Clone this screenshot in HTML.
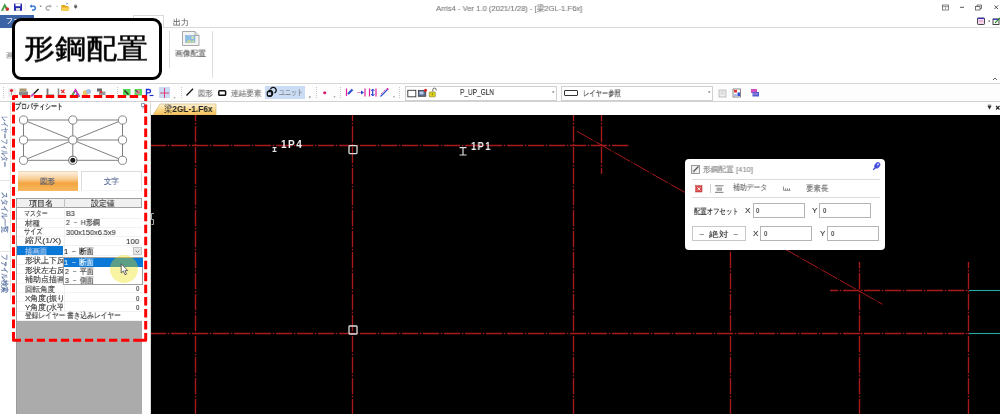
<!DOCTYPE html>
<html><head><meta charset="utf-8">
<style>
*{margin:0;padding:0;box-sizing:border-box}
html,body{width:1000px;height:414px;overflow:hidden;background:#fff;font-family:"Liberation Sans",sans-serif;color:#333}
.a{position:absolute;white-space:nowrap}
.tx{will-change:transform}
</style></head><body>
<svg class="a" style="left:0;top:0" width="90" height="14"><path d="M1 10.8L4.8 3.2L8.6 10.8Z" fill="#3a9a3a"/><path d="M3 10.8L4.8 7L6.6 10.8Z" fill="#fff"/><circle cx="7.3" cy="9" r="1.8" fill="#d03030"/><rect x="14" y="3.6" width="8" height="7.2" fill="#2a2ab0"/><rect x="15.5" y="3.6" width="5" height="2.6" fill="#fff"/><rect x="16" y="8" width="4" height="2.8" fill="#ddd"/><path d="M25.2 3V11" stroke="#e4e4e4"/><path d="M30.5 6.2H34a2 2 0 0 1 0 3.8H32" stroke="#3a78d0" stroke-width="1.6" fill="none"/><path d="M29.7 6.2L31.8 4.3V8.1Z" fill="#3a78d0"/><path d="M39.5 5.8h2.4l-1.2 1.3z" fill="#555"/><path d="M51 6.2H47.5a2 2 0 0 0 0 3.8H49.5" stroke="#b0b0b0" stroke-width="1.5" fill="none"/><path d="M51.8 6.2L49.7 4.3V8.1Z" fill="#b0b0b0"/><path d="M56 5.8h2.2l-1.1 1.2z" fill="#bbb"/><path d="M61.3 5H65L66 6H68.5V10.8H61.3Z" fill="#e0a820"/><path d="M62.3 7.5H69.8L68.5 10.8H61.3Z" fill="#f6d050"/><path d="M66 4.2L68 3.2" stroke="#6a8ac0" stroke-width="1"/><path d="M74.3 5.2h2.7M74.3 6.4h2.7l-1.35 1.9z" stroke="#444" stroke-width="0.8" fill="#444"/></svg>
<div class="a tx" style="left:435.60px;top:3.50px;font-size:8px;line-height:10px;color:#7a7a7a;font-weight:normal;font-family:'Liberation Sans',sans-serif;transform:scale(0.951,1.000);transform-origin:0 0;-webkit-text-stroke:0.12px #7a7a7a;">Arris4 - Ver 1.0 (2021/1/28) - [梁2GL-1.F6x]</div>
<svg class="a" style="left:930px;top:0" width="70" height="30"><rect x="12.5" y="5" width="6" height="5" fill="none" stroke="#666" stroke-width="0.8"/><path d="M12.5 6.6H18.5M15.5 7.3V9" stroke="#666" stroke-width="0.7"/><path d="M30 7.3H34" stroke="#444" stroke-width="0.9"/><rect x="45.5" y="6.5" width="4.5" height="3.5" fill="none" stroke="#555" stroke-width="0.8"/><path d="M47 6.5V5H51.5V8.5H50" fill="none" stroke="#555" stroke-width="0.8"/><path d="M64.5 5.5L68 9M68 5.5L64.5 9" stroke="#444" stroke-width="0.9"/><rect x="47.5" y="18" width="7" height="6.5" rx="0.8" fill="#f4d8f0" stroke="#333" stroke-width="0.9"/><path d="M47.5 18.4H54.5" stroke="#2a2ad0" stroke-width="1"/><path d="M49 21H53" stroke="#e080c0" stroke-width="0.8"/><rect x="58.5" y="20.5" width="1.4" height="1.2" fill="#444"/><rect x="63" y="19" width="6" height="5.5" fill="#fff" stroke="#333" stroke-width="0.9"/><path d="M63 19.3H69" stroke="#2a2ad0" stroke-width="1"/><path d="M65 23L70 18" stroke="#2a8a2a" stroke-width="1.1"/></svg>
<div class="a" style="left:0;top:27px;width:1000px;height:1px;background:#dadada"></div>
<div class="a" style="left:0;top:15px;width:34px;height:13px;background:#3c63a6"></div>
<div class="a tx" style="left:5.60px;top:16.30px;font-size:7px;line-height:9px;color:#ffffff;font-weight:normal;font-family:'Liberation Sans',sans-serif;-webkit-text-stroke:0.12px #ffffff;">ファイル</div>
<div class="a" style="left:133px;top:15px;width:31px;height:13px;border:1px solid #dadada;border-bottom:none;background:#fff"></div>
<div class="a tx" style="left:172.80px;top:17.60px;font-size:8px;line-height:10px;color:#5a5a5a;font-weight:normal;font-family:'Liberation Sans',sans-serif;transform:scale(0.987,1.000);transform-origin:0 0;-webkit-text-stroke:0.12px #5a5a5a;">出力</div>
<div class="a tx" style="left:5.70px;top:50.60px;font-size:8px;line-height:10px;color:#888;font-weight:normal;font-family:'Liberation Sans',sans-serif;-webkit-text-stroke:0.12px #888;">画</div>
<div class="a" style="left:169px;top:31px;width:1px;height:37px;background:#dedede"></div>
<div class="a" style="left:212px;top:31px;width:1px;height:47px;background:#dedede"></div>
<svg class="a" style="left:181px;top:30px" width="20" height="17"><path d="M1.5 1.5H14L18 5.5V15.5H1.5Z" fill="#f4f4f4" stroke="#a8a8a8"/><path d="M14 1.5V5.5H18" fill="#e0e0e0" stroke="#a8a8a8"/><rect x="4.5" y="5.5" width="9.5" height="7" fill="#8cbde6" stroke="#7aa8d0" stroke-width="0.5"/><path d="M5 12.5L8 9.5L10.5 11.5L12.5 10L13.8 12.5Z" fill="#c8d890"/><circle cx="11.5" cy="7.5" r="1.2" fill="#f0e8a0"/></svg>
<div class="a tx" style="left:175.00px;top:49.30px;font-size:8px;line-height:10px;color:#5e5e5e;font-weight:normal;font-family:'Liberation Sans',sans-serif;transform:scale(0.969,1.000);transform-origin:0 0;-webkit-text-stroke:0.12px #5e5e5e;">画像配置</div>
<svg class="a" style="left:990px;top:74px" width="10" height="8"><path d="M3 6L5 4L7 6" stroke="#666" stroke-width="1" fill="none"/></svg>
<div class="a" style="left:0;top:83px;width:1000px;height:1px;background:#d6d6d6"></div>
<div class="a" style="left:0;top:84px;width:1000px;height:17px;background:#fdfdfd"></div>
<div class="a" style="left:0;top:101px;width:1000px;height:1px;background:#d2d2d2"></div>
<div class="a" style="left:3px;top:87px;width:1px;height:12px;background:repeating-linear-gradient(#c8c8c8 0 1px,transparent 1px 2px)"></div><div class="a" style="left:117px;top:87px;width:1px;height:12px;background:repeating-linear-gradient(#c8c8c8 0 1px,transparent 1px 2px)"></div><div class="a" style="left:181px;top:87px;width:1px;height:12px;background:repeating-linear-gradient(#c8c8c8 0 1px,transparent 1px 2px)"></div><div class="a" style="left:316px;top:87px;width:1px;height:12px;background:repeating-linear-gradient(#c8c8c8 0 1px,transparent 1px 2px)"></div><div class="a" style="left:340px;top:87px;width:1px;height:12px;background:repeating-linear-gradient(#c8c8c8 0 1px,transparent 1px 2px)"></div><div class="a" style="left:399px;top:87px;width:1px;height:12px;background:repeating-linear-gradient(#c8c8c8 0 1px,transparent 1px 2px)"></div>
<div class="a" style="left:159px;top:86.7px;width:11px;height:11px;background:#c9dcf3"></div>
<div class="a" style="left:265px;top:86px;width:40px;height:12.7px;background:#c9dcf3"></div>
<svg class="a" style="left:0;top:84px" width="450" height="17"><rect x="9" y="5" width="6" height="7" fill="#f4f4f4" stroke="#ccc" stroke-width="0.6"/><circle cx="11.5" cy="6.5" r="1.6" fill="#e02030"/><path d="M11.5 8V11" stroke="#888" stroke-width="0.8"/><rect x="19.5" y="4.5" width="7" height="3" fill="#a89870"/><rect x="19" y="7.5" width="9" height="3.5" fill="#8a8a8a"/><rect x="20" y="11" width="7" height="1.5" fill="#bbb"/><path d="M31.5 12L38.5 5" stroke="#222" stroke-width="1.6"/><path d="M31 12.5L34 9.5" stroke="#d050e0" stroke-width="1.4"/><path d="M47.5 4.5V11.5H54" stroke="#777" stroke-width="1.8" fill="none"/><path d="M58.5 4.5V11.5H65" stroke="#888" stroke-width="1.5" fill="none"/><path d="M61 6L64.5 9M64.5 5.5L61.5 9" stroke="#e03030" stroke-width="1.2"/><path d="M71 11.8L75.5 4.2L80 11.8H77.8L75.5 7.8L73.2 11.8Z" fill="#c030b0"/><path d="M71 11.8L73.5 7.6L74.6 9.4L73.2 11.8Z" fill="#50b050"/><path d="M71 11.8H80V12.6H71Z" fill="#2030a0"/><path d="M76.3 9.2L78.2 12.6H74.8Z" fill="#3050d0"/><circle cx="85.5" cy="9" r="2.7" fill="#e8c860"/><circle cx="88.5" cy="7.5" r="2.5" fill="#a8c0e0"/><rect x="97" y="4.5" width="5" height="3" fill="#666"/><rect x="99" y="7.5" width="6.5" height="3.5" fill="#999"/><circle cx="101" cy="8" r="1.3" fill="#e03030"/><path d="M110.5 13.5h2l-1 1z" fill="#555"/><rect x="123" y="5" width="7.5" height="6.5" fill="#58d858"/><path d="M124.5 6.5L128.5 10.5" stroke="#222" stroke-width="1.3"/><rect x="134.5" y="5" width="7.5" height="6.5" fill="#58d858"/><circle cx="138" cy="8" r="2" fill="#e080a0"/><path d="M135.5 6L138 8.5" stroke="#222" stroke-width="1"/><path d="M146.5 12V5.5H148.8a1.7 1.7 0 0 1 0 3.4H146.5" stroke="#2030d0" stroke-width="1.4" fill="none"/><path d="M149.5 11.5H153.5" stroke="#2030d0" stroke-width="1.2"/><path d="M164.5 4V14M160 9H169" stroke="#e03070" stroke-width="0.9"/><path d="M173.5 13.5h2l-1 1z" fill="#555"/><path d="M186.5 11.5L193 4.8" stroke="#111" stroke-width="1.3"/><rect x="218.8" y="6.8" width="6.8" height="4.5" rx="0.8" fill="none" stroke="#111" stroke-width="1.5"/><path d="M268.5 6.5a3 3 0 1 1 0 5.5" fill="none" stroke="#111" stroke-width="1.3"/><rect x="267.3" y="7.5" width="4.5" height="4.5" rx="1" fill="none" stroke="#111" stroke-width="1.3"/><path d="M270.5 5a3 3 0 1 1 4 4" fill="none" stroke="#111" stroke-width="1.3"/><path d="M308.8 12.5h2l-1 1z" fill="#555"/><path d="M308.8 13.7h2" stroke="#555" stroke-width="0.4"/><circle cx="324.7" cy="8.7" r="1.5" fill="#d81870"/><path d="M333.5 12.5h2l-1 1z" fill="#555"/><path d="M346.5 4.5V12" stroke="#e0209a" stroke-width="1.2"/><path d="M348 10L352.5 5.5" stroke="#3050d0" stroke-width="2.2"/><path d="M357.5 8.5H363" stroke="#e0209a" stroke-width="1" stroke-dasharray="1 1"/><path d="M361 6.5L364 8.5L361 10.5Z" fill="#2040d0"/><path d="M365 4.5V12.5" stroke="#e0209a" stroke-width="1.2"/><path d="M369.5 4.5V12.5M376 4.5V12.5" stroke="#e0209a" stroke-width="1.2"/><path d="M372.7 5V12" stroke="#2040d0" stroke-width="1.2"/><path d="M371 7L372.7 5L374.4 7M371 10L372.7 12L374.4 10" stroke="#2040d0" stroke-width="0.9" fill="none"/><path d="M380.5 12.5L388 5" stroke="#3050d0" stroke-width="1.3"/><path d="M381 10L386 5" stroke="#e0209a" stroke-width="0.9" stroke-dasharray="1.2 1"/><circle cx="387.5" cy="5" r="1" fill="#e0209a"/><path d="M393 12.5h2l-1 1z" fill="#555"/></svg>
<div class="a tx" style="left:198.20px;top:88.60px;font-size:8px;line-height:10px;color:#7a7a7a;font-weight:normal;font-family:'Liberation Sans',sans-serif;transform:scale(0.919,1.000);transform-origin:0 0;-webkit-text-stroke:0.12px #7a7a7a;">図形</div>
<div class="a tx" style="left:230.70px;top:88.60px;font-size:8px;line-height:10px;color:#7a7a7a;font-weight:normal;font-family:'Liberation Sans',sans-serif;transform:scale(0.953,1.000);transform-origin:0 0;-webkit-text-stroke:0.12px #7a7a7a;">連結要素</div>
<div class="a tx" style="left:278.65px;top:88.10px;font-size:8px;line-height:10px;color:#7a7a7a;font-weight:normal;font-family:'Liberation Sans',sans-serif;transform:scale(0.748,1.000);transform-origin:0 0;-webkit-text-stroke:0.12px #7a7a7a;">ユニット</div>
<div class="a" style="left:405px;top:86px;width:152px;height:14.7px;border:1px solid #d0d0d0;background:#fff"></div>
<svg class="a" style="left:405px;top:84px" width="40" height="17"><rect x="2.8" y="6.3" width="8" height="6.5" fill="#fff" stroke="#333" stroke-width="0.9"/><rect x="13.3" y="6.3" width="7.5" height="6" fill="#5a6a8a" stroke="#333" stroke-width="0.7"/><rect x="14.5" y="7.5" width="4" height="3" fill="#b8c8f0"/><circle cx="20.5" cy="6.2" r="1.5" fill="#e02020"/><path d="M27.8 7.5V5.8a1.7 1.7 0 0 1 3.4 0V6.5" fill="none" stroke="#555" stroke-width="0.9"/><rect x="24.3" y="8" width="6" height="4.8" rx="0.6" fill="#e0d820" stroke="#7a7010" stroke-width="0.6"/><rect x="26.8" y="9.5" width="1" height="1.8" fill="#7a7010"/></svg>
<div class="a tx" style="left:460.00px;top:87.00px;font-size:9px;line-height:11px;color:#2a2a2a;font-weight:normal;font-family:'Liberation Sans',sans-serif;transform:scale(0.723,1.000);transform-origin:0 0;-webkit-text-stroke:0.12px #2a2a2a;">P_UP_GLN</div>
<svg class="a" style="left:551px;top:90px" width="5" height="5"><path d="M1 1.5h2.5l-1.25 1.5z" fill="#555"/></svg>
<div class="a" style="left:560.5px;top:86px;width:152px;height:14.7px;border:1px solid #d0d0d0;background:#fff"></div>
<div class="a" style="left:564px;top:90px;width:13.5px;height:6.3px;border:1px solid #333;border-radius:1px"></div>
<div class="a tx" style="left:583.21px;top:88.50px;font-size:8px;line-height:10px;color:#444;font-weight:normal;font-family:'Liberation Sans',sans-serif;transform:scale(0.787,1.000);transform-origin:0 0;-webkit-text-stroke:0.12px #444;">レイヤー参照</div>
<svg class="a" style="left:707px;top:90px" width="5" height="5"><path d="M1 1.5h2.5l-1.25 1.5z" fill="#555"/></svg>
<svg class="a" style="left:715px;top:84px" width="50" height="17"><rect x="4" y="6" width="7" height="7" fill="#f0f0f0" stroke="#aaa" stroke-width="0.7"/><path d="M5.5 8H9.5M5.5 10H9.5" stroke="#bbb" stroke-width="0.7"/><rect x="18" y="5" width="7.5" height="8" fill="#fff" stroke="#555" stroke-width="0.7"/><rect x="19" y="6" width="3" height="2.5" fill="#e03030"/><rect x="22.5" y="8.5" width="2.5" height="3.5" fill="#3050d0"/><path d="M19 11H22" stroke="#3050d0" stroke-width="0.8"/><rect x="36" y="5" width="6" height="4" fill="#d050c0"/><rect x="37.5" y="8" width="6.5" height="4.5" fill="#5060d0"/><path d="M38 10H43" stroke="#f0a0e0" stroke-width="0.7"/></svg>
<div class="a" style="left:11px;top:102px;width:139px;height:312px;background:#fff"></div>
<div class="a" style="left:150px;top:102px;width:1px;height:312px;background:#d8d8d8"></div>
<div class="a tx" style="left:14.50px;top:101.50px;font-size:8px;line-height:10px;color:#1e1e1e;font-weight:bold;font-family:'Liberation Sans',sans-serif;transform:scale(0.750,1.000);transform-origin:0 0;">プロパティシート</div>
<svg class="a" style="left:139px;top:102px" width="8" height="8"><path d="M2.5 1.5h3v3h-3z" fill="none" stroke="#6a80a8" stroke-width="0.8"/><path d="M4 4.5V6.5" stroke="#6a80a8" stroke-width="0.8"/></svg>
<svg class="a" style="left:0;top:0" width="150" height="170">
<g stroke="#707070" stroke-width="0.9" fill="none">
<path d="M23.5 120H122.5M23.5 140H122.5M23.5 160.3H122.5M23.5 120V160.3M72.8 120V160.3M122.5 120V160.3M23.5 120L122.5 160.3M122.5 120L23.5 160.3"/>
</g>
<g stroke="#7a7a7a" stroke-width="0.9" fill="#fff">
<circle cx="23.5" cy="120" r="4.1"/><circle cx="72.8" cy="120" r="4.1"/><circle cx="122.5" cy="120" r="4.1"/>
<circle cx="23.5" cy="140" r="4.1"/><circle cx="72.8" cy="140" r="4.1"/><circle cx="122.5" cy="140" r="4.1"/>
<circle cx="23.5" cy="160.3" r="4.1"/><circle cx="122.5" cy="160.3" r="4.1"/>
<circle cx="72.8" cy="160.3" r="4.1" stroke="#555"/>
</g>
<circle cx="72.8" cy="160.3" r="2.5" fill="#1e1e1e"/>
</svg>
<div class="a" style="left:0;top:102px;width:11px;height:198px;background:#fff;border-right:1px solid #e2e2e2"></div>
<div class="a" style="left:0;top:179.5px;width:10px;height:1px;background:#e4e4e4"></div>
<div class="a" style="left:0;top:251px;width:10px;height:1px;background:#e4e4e4"></div>
<div class="a" style="left:8.2px;top:116.00px;color:#4a6498;font-size:7.6px;line-height:8px;will-change:transform;-webkit-text-stroke:0.15px #4a6498;transform-origin:0 0;transform:rotate(90deg) scaleX(0.711)">レイヤーフィルター</div>
<div class="a" style="left:8.2px;top:191.80px;color:#4a6498;font-size:7.6px;line-height:8px;will-change:transform;-webkit-text-stroke:0.15px #4a6498;transform-origin:0 0;transform:rotate(90deg) scaleX(0.851)">スタイル一覧</div>
<div class="a" style="left:8.2px;top:253.50px;color:#4a6498;font-size:7.6px;line-height:8px;will-change:transform;-webkit-text-stroke:0.15px #4a6498;transform-origin:0 0;transform:rotate(90deg) scaleX(0.811)">ファイル検索</div>
<div class="a" style="left:18px;top:171.2px;width:59.5px;height:20.2px;border-top:1px solid #efd8b8;background:linear-gradient(#fdf0e0 0%,#f9cf98 35%,#f4a540 60%,#f7b860 100%)"></div>
<div class="a tx" style="left:39.70px;top:177.32px;font-size:8px;line-height:10px;color:#4a5878;font-weight:normal;font-family:'Liberation Sans',sans-serif;transform:scale(0.938,1.000);transform-origin:0 0;-webkit-text-stroke:0.12px #4a5878;">図形</div>
<div class="a" style="left:81.3px;top:171.2px;width:60.5px;height:20.2px;border:1px solid #dcdcdc;border-bottom-color:#f4f4f4;background:#fff"></div>
<div class="a tx" style="left:104.00px;top:177.38px;font-size:8px;line-height:10px;color:#4a6090;font-weight:normal;font-family:'Liberation Sans',sans-serif;transform:scale(0.938,1.000);transform-origin:0 0;-webkit-text-stroke:0.12px #4a6090;">文字</div>
<div class="a" style="left:16.3px;top:198px;width:126px;height:123px;background:#fff;border:1px solid #a8a8a8;border-top:none;border-right:none"></div>
<div class="a" style="left:16.3px;top:197.9px;width:126px;height:10px;background:#f0f0f0;border:1px solid #a0a0a0"></div>
<div class="a" style="left:63.5px;top:198px;width:1.2px;height:10px;background:#c0c0c0"></div>
<div class="a tx" style="left:28.70px;top:198.95px;font-size:8px;line-height:10px;color:#2a2a2a;font-weight:normal;font-family:'Liberation Sans',sans-serif;transform:scale(1.013,1.000);transform-origin:0 0;-webkit-text-stroke:0.12px #2a2a2a;">項目名</div>
<div class="a tx" style="left:91.00px;top:199.45px;font-size:8px;line-height:10px;color:#2a2a2a;font-weight:normal;font-family:'Liberation Sans',sans-serif;transform:scale(0.979,1.000);transform-origin:0 0;-webkit-text-stroke:0.12px #2a2a2a;">設定値</div>
<div class="a" style="left:17.3px;top:217.50px;width:124.5px;height:1px;background:#f2f2f2"></div>
<div class="a" style="left:17.3px;top:226.80px;width:124.5px;height:1px;background:#f2f2f2"></div>
<div class="a" style="left:17.3px;top:236.10px;width:124.5px;height:1px;background:#f2f2f2"></div>
<div class="a" style="left:17.3px;top:245.40px;width:124.5px;height:1px;background:#f2f2f2"></div>
<div class="a" style="left:17.3px;top:254.70px;width:124.5px;height:1px;background:#f2f2f2"></div>
<div class="a" style="left:17.3px;top:264.00px;width:124.5px;height:1px;background:#f2f2f2"></div>
<div class="a" style="left:17.3px;top:273.30px;width:124.5px;height:1px;background:#f2f2f2"></div>
<div class="a" style="left:17.3px;top:282.60px;width:124.5px;height:1px;background:#f2f2f2"></div>
<div class="a" style="left:17.3px;top:291.90px;width:124.5px;height:1px;background:#f2f2f2"></div>
<div class="a" style="left:17.3px;top:301.20px;width:124.5px;height:1px;background:#f2f2f2"></div>
<div class="a" style="left:17.3px;top:310.50px;width:124.5px;height:1px;background:#f2f2f2"></div>
<div class="a" style="left:17.3px;top:319.80px;width:124.5px;height:1px;background:#f2f2f2"></div>
<div class="a" style="left:63.6px;top:208.5px;width:1px;height:103px;background:#f0f0f0"></div>
<div class="a" style="left:17.3px;top:246px;width:45.8px;height:9px;background:#0a78d6"></div>
<div class="a tx" style="left:24.01px;top:209.05px;font-size:8px;line-height:10px;color:#3a3a3a;font-weight:normal;font-family:'Liberation Sans',sans-serif;transform:scale(0.738,1.000);transform-origin:0 0;-webkit-text-stroke:0.12px #3a3a3a;">マスター</div>
<div class="a tx" style="left:24.75px;top:218.70px;font-size:8px;line-height:10px;color:#3a3a3a;font-weight:normal;font-family:'Liberation Sans',sans-serif;transform:scale(0.934,1.000);transform-origin:0 0;-webkit-text-stroke:0.12px #3a3a3a;">材種</div>
<div class="a tx" style="left:23.99px;top:227.30px;font-size:8px;line-height:10px;color:#3a3a3a;font-weight:normal;font-family:'Liberation Sans',sans-serif;transform:scale(0.763,1.000);transform-origin:0 0;-webkit-text-stroke:0.12px #3a3a3a;">サイズ</div>
<div class="a tx" style="left:24.75px;top:236.40px;font-size:8px;line-height:10px;color:#3a3a3a;font-weight:normal;font-family:'Liberation Sans',sans-serif;transform:scale(1.083,1.000);transform-origin:0 0;-webkit-text-stroke:0.12px #3a3a3a;">縮尺(1/X)</div>
<div class="a tx" style="left:24.75px;top:247.20px;font-size:8px;line-height:10px;color:#c8d4ee;font-weight:normal;font-family:'Liberation Sans',sans-serif;transform:scale(0.923,1.000);transform-origin:0 0;-webkit-text-stroke:0.12px #c8d4ee;">描画面</div>
<div class="a" style="left:17px;top:255.0px;width:46px;height:10.0px;overflow:hidden"><div style="position:absolute;left:-17px;top:-255.0px"><div class="a tx" style="left:24.50px;top:256.30px;font-size:8px;line-height:10px;color:#3a3a3a;font-weight:normal;font-family:'Liberation Sans',sans-serif;-webkit-text-stroke:0.12px #3a3a3a;">形状上下反転</div></div></div>
<div class="a" style="left:17px;top:264.2px;width:46px;height:10.0px;overflow:hidden"><div style="position:absolute;left:-17px;top:-264.2px"><div class="a tx" style="left:24.50px;top:265.50px;font-size:8px;line-height:10px;color:#3a3a3a;font-weight:normal;font-family:'Liberation Sans',sans-serif;-webkit-text-stroke:0.12px #3a3a3a;">形状左右反転</div></div></div>
<div class="a" style="left:17px;top:273.4px;width:46px;height:10.0px;overflow:hidden"><div style="position:absolute;left:-17px;top:-273.4px"><div class="a tx" style="left:24.50px;top:274.70px;font-size:8px;line-height:10px;color:#3a3a3a;font-weight:normal;font-family:'Liberation Sans',sans-serif;-webkit-text-stroke:0.12px #3a3a3a;">補助点描画</div></div></div>
<div class="a tx" style="left:24.75px;top:284.55px;font-size:8px;line-height:10px;color:#3a3a3a;font-weight:normal;font-family:'Liberation Sans',sans-serif;transform:scale(0.936,1.000);transform-origin:0 0;-webkit-text-stroke:0.12px #3a3a3a;">回転角度</div>
<div class="a" style="left:17px;top:293.0px;width:46px;height:10.0px;overflow:hidden"><div style="position:absolute;left:-17px;top:-293.0px"><div class="a tx" style="left:24.50px;top:293.80px;font-size:8px;line-height:10px;color:#3a3a3a;font-weight:normal;font-family:'Liberation Sans',sans-serif;-webkit-text-stroke:0.12px #3a3a3a;">X角度(振り)</div></div></div>
<div class="a" style="left:17px;top:302.1px;width:46px;height:10.0px;overflow:hidden"><div style="position:absolute;left:-17px;top:-302.1px"><div class="a tx" style="left:24.50px;top:302.90px;font-size:8px;line-height:10px;color:#3a3a3a;font-weight:normal;font-family:'Liberation Sans',sans-serif;-webkit-text-stroke:0.12px #3a3a3a;">Y角度(水平)</div></div></div>
<div class="a tx" style="left:24.75px;top:311.30px;font-size:8px;line-height:10px;color:#3a3a3a;font-weight:normal;font-family:'Liberation Sans',sans-serif;transform:scale(0.840,1.000);transform-origin:0 0;-webkit-text-stroke:0.12px #3a3a3a;">登録レイヤー 書き込みレイヤー</div>
<div class="a tx" style="left:65.70px;top:208.85px;font-size:8px;line-height:10px;color:#3a3a3a;font-weight:normal;font-family:'Liberation Sans',sans-serif;transform:scale(0.910,1.000);transform-origin:0 0;-webkit-text-stroke:0.12px #3a3a3a;">B3</div>
<div class="a tx" style="left:65.70px;top:218.15px;font-size:8px;line-height:10px;color:#3a3a3a;font-weight:normal;font-family:'Liberation Sans',sans-serif;transform:scale(0.867,1.000);transform-origin:0 0;-webkit-text-stroke:0.12px #3a3a3a;">2 － H形鋼</div>
<div class="a tx" style="left:65.70px;top:227.60px;font-size:8px;line-height:10px;color:#3a3a3a;font-weight:normal;font-family:'Liberation Sans',sans-serif;transform:scale(0.915,1.000);transform-origin:0 0;-webkit-text-stroke:0.12px #3a3a3a;">300x150x6.5x9</div>
<div class="a tx" style="left:126.12px;top:236.75px;font-size:8px;line-height:10px;color:#3a3a3a;font-weight:normal;font-family:'Liberation Sans',sans-serif;transform:scale(0.977,1.000);transform-origin:0 0;-webkit-text-stroke:0.12px #3a3a3a;">100</div>
<div class="a tx" style="left:64.10px;top:247.15px;font-size:8px;line-height:10px;color:#111;font-weight:normal;font-family:'Liberation Sans',sans-serif;transform:scale(0.897,1.000);transform-origin:0 0;-webkit-text-stroke:0.12px #111;">1 － 断面</div>
<div class="a tx" style="left:136.00px;top:284.05px;font-size:8px;line-height:10px;color:#3a3a3a;font-weight:normal;font-family:'Liberation Sans',sans-serif;transform:scale(0.760,1.000);transform-origin:0 0;-webkit-text-stroke:0.12px #3a3a3a;">0</div>
<div class="a tx" style="left:136.00px;top:293.80px;font-size:8px;line-height:10px;color:#3a3a3a;font-weight:normal;font-family:'Liberation Sans',sans-serif;transform:scale(0.760,1.000);transform-origin:0 0;-webkit-text-stroke:0.12px #3a3a3a;">0</div>
<div class="a tx" style="left:136.00px;top:302.90px;font-size:8px;line-height:10px;color:#3a3a3a;font-weight:normal;font-family:'Liberation Sans',sans-serif;transform:scale(0.760,1.000);transform-origin:0 0;-webkit-text-stroke:0.12px #3a3a3a;">0</div>
<div class="a" style="left:132.7px;top:246.6px;width:9.1px;height:8.4px;border:1px solid #c4c4c4;background:#e6e6e6"></div>
<svg class="a" style="left:132.7px;top:246.6px" width="9" height="9"><path d="M2.7 3.6L4.55 5.4L6.4 3.6" stroke="#666" fill="none" stroke-width="0.8"/></svg>
<div class="a" style="left:63.4px;top:257px;width:79.7px;height:28px;background:#fff;border:1px solid #a0a0a0"></div>
<div class="a" style="left:64.2px;top:258px;width:78.8px;height:8.75px;background:#0a78d6"></div>
<div class="a tx" style="left:64.10px;top:258.25px;font-size:8px;line-height:10px;color:#ffffff;font-weight:normal;font-family:'Liberation Sans',sans-serif;transform:scale(0.897,1.000);transform-origin:0 0;-webkit-text-stroke:0.12px #ffffff;">1 － 断面</div>
<div class="a tx" style="left:65.00px;top:267.30px;font-size:8px;line-height:10px;color:#333;font-weight:normal;font-family:'Liberation Sans',sans-serif;transform:scale(0.870,1.000);transform-origin:0 0;-webkit-text-stroke:0.12px #333;">2 － 平面</div>
<div class="a tx" style="left:65.00px;top:275.75px;font-size:8px;line-height:10px;color:#333;font-weight:normal;font-family:'Liberation Sans',sans-serif;transform:scale(0.870,1.000);transform-origin:0 0;-webkit-text-stroke:0.12px #333;">3 － 側面</div>
<div class="a" style="left:110.1px;top:254.8px;width:28px;height:28px;border-radius:50%;background:rgba(236,225,0,0.37)"></div>
<svg class="a" style="left:120px;top:263px" width="10" height="13"><path d="M1.2 0.8V10L3.3 8.1L5 11.8L6.5 11.1L4.9 7.6H7.8Z" fill="#fff" stroke="#444" stroke-width="0.8" stroke-linejoin="round"/></svg>
<div class="a" style="left:16.3px;top:320.6px;width:125.8px;height:94px;background:#ababab;border-left:1px solid #9a9a9a"></div>
<div class="a" style="left:151px;top:102px;width:849px;height:13px;background:#fff"></div>
<svg class="a" style="left:150px;top:101px" width="70" height="14"><defs><linearGradient id="tg" x1="0" y1="0" x2="0" y2="1"><stop offset="0" stop-color="#fdf3d8"/><stop offset="0.5" stop-color="#fbd98c"/><stop offset="1" stop-color="#f6bf55"/></linearGradient></defs><path d="M3 14L10 3H66V14Z" fill="url(#tg)" stroke="#d8b880" stroke-width="0.7"/></svg>
<div class="a tx" style="left:163.50px;top:104.25px;font-size:9px;line-height:11px;color:#222;font-weight:bold;font-family:'Liberation Sans',sans-serif;transform:scale(0.925,1.000);transform-origin:0 0;"><span style="font-weight:normal">梁</span>2GL-1.F6x</div>
<svg class="a" style="left:985px;top:103px" width="15" height="10"><path d="M2.5 3H6.5L4.5 6.5Z" fill="#333"/><path d="M2.8 2.2H6.2" stroke="#333" stroke-width="0.8"/><path d="M11 3L14.5 6.5M14.5 3L11 6.5" stroke="#222" stroke-width="1.1"/></svg>
<div class="a" style="left:151px;top:115px;width:849px;height:299px;background:#000"></div>
<svg class="a" style="left:0;top:0" width="1000" height="414">
<g stroke="#a81a1a" stroke-width="1.35" stroke-dasharray="16.2 1.6 1.6 1.6" fill="none">
<line x1="195.5" y1="115" x2="195.5" y2="414" stroke-dashoffset="10"/><line x1="352.5" y1="115" x2="352.5" y2="414" stroke-dashoffset="10"/><line x1="573.5" y1="115" x2="573.5" y2="414" stroke-dashoffset="10"/><line x1="601.5" y1="115" x2="601.5" y2="174" stroke-dashoffset="10"/><line x1="730.5" y1="250" x2="730.5" y2="414" stroke-dashoffset="19"/><line x1="859.5" y1="262" x2="859.5" y2="414" stroke-dashoffset="10"/><line x1="968.5" y1="262" x2="968.5" y2="414" stroke-dashoffset="10"/>
<line x1="151" y1="145.5" x2="630" y2="145.5" stroke-dashoffset="1"/><line x1="151" y1="333.5" x2="969" y2="333.5" stroke-dashoffset="1"/><line x1="830" y1="290.5" x2="969" y2="290.5" stroke-dashoffset="8"/>
<line x1="577" y1="131.3" x2="882.5" y2="304.3" stroke-width="1" stroke-dasharray="18 1.2 1.2 1.2"/>
</g>
<line x1="969" y1="333.5" x2="1000" y2="333.5" stroke="#24a8a8" stroke-width="1.1"/>
<line x1="969" y1="290.5" x2="1000" y2="290.5" stroke="#24a8a8" stroke-width="1.1"/>
<rect x="349" y="145.6" width="8" height="8" rx="0.8" fill="none" stroke="#ddd" stroke-width="1.3"/>
<rect x="349" y="326" width="8" height="8" rx="0.8" fill="none" stroke="#ddd" stroke-width="1.3"/>
<g stroke="#ddd" stroke-width="1.2" fill="none">
<path d="M272.5 147.6h4M274.5 147.6v3.8M272.5 151.4h4"/>
<path d="M459.5 147.6h7M463 147.6v7.4M459.5 155h7"/>
</g>
</svg>
<div class="a tx" style="left:281.00px;top:138.75px;font-size:10px;line-height:12px;color:#f0f0f0;font-weight:bold;font-family:'Liberation Sans',sans-serif;letter-spacing:1.5px;transform:scale(0.986,1.000);transform-origin:0 0;">1P4</div>
<div class="a tx" style="left:471.00px;top:141.15px;font-size:10px;line-height:12px;color:#f0f0f0;font-weight:bold;font-family:'Liberation Sans',sans-serif;letter-spacing:1.5px;transform:scale(0.933,1.000);transform-origin:0 0;">1P1</div>
<svg class="a" style="left:150px;top:210px" width="8" height="18"><path d="M1.5 3.5H4M1.5 3.5V9.5M1.5 9.5H3.5V14.5H1.5" stroke="#bbb" stroke-width="0.9" fill="none"/></svg>
<div class="a" style="left:684.8px;top:158.5px;width:200.4px;height:91.5px;background:#fff;border-radius:4px"></div>
<svg class="a" style="left:691px;top:165px" width="9" height="9"><rect x="0.5" y="0.5" width="8" height="8" fill="#f0f0f0" stroke="#999"/><path d="M2 7L7.5 1.5" stroke="#555" stroke-width="1.3"/><path d="M1.5 5.5l2 2" stroke="#999"/></svg>
<div class="a tx" style="left:703.00px;top:164.70px;font-size:8px;line-height:10px;color:#8a8a8a;font-weight:normal;font-family:'Liberation Sans',sans-serif;transform:scale(0.962,1.000);transform-origin:0 0;-webkit-text-stroke:0.12px #8a8a8a;">形鋼配置 [410]</div>
<svg class="a" style="left:872px;top:160.5px" width="10" height="10"><ellipse cx="5.3" cy="4.3" rx="2.6" ry="3.4" transform="rotate(40 5.3 4.3)" fill="#4a50e0"/><ellipse cx="6" cy="3.4" rx="0.9" ry="1.2" transform="rotate(40 6 3.4)" fill="#c8ccf8"/><path d="M3.8 6.2L1.2 8.8" stroke="#3a40d0" stroke-width="1.3"/></svg>
<div class="a" style="left:691.5px;top:178.5px;width:188px;height:1px;background:#dcdcdc"></div>
<svg class="a" style="left:695px;top:184.5px" width="8" height="8"><rect x="0.7" y="0.7" width="6.3" height="6.3" fill="#d84848" stroke="#b03030" stroke-width="0.5"/><path d="M2.3 2.3L5.4 5.4M5.4 2.3L2.3 5.4" stroke="#fff" stroke-width="0.9"/></svg>
<div class="a" style="left:710px;top:183.5px;width:1px;height:9.5px;background:#cfcfcf"></div>
<svg class="a" style="left:715px;top:184.5px" width="9" height="8"><path d="M0 0.8H8.5M0 7.3H8.5" stroke="#777"/><rect x="1.5" y="2.5" width="5.5" height="3.3" fill="#aaa"/></svg>
<div class="a tx" style="left:733.00px;top:183.30px;font-size:8px;line-height:10px;color:#6a6a6a;font-weight:normal;font-family:'Liberation Sans',sans-serif;transform:scale(0.856,1.000);transform-origin:0 0;-webkit-text-stroke:0.12px #6a6a6a;">補助データ</div>
<svg class="a" style="left:783px;top:185.5px" width="8" height="5"><path d="M0.5 0.5V4.3H7.5M2.5 2.3V4.3M4.5 2.3V4.3M6.5 2.3V4.3" stroke="#777" stroke-width="0.8" fill="none"/></svg>
<div class="a tx" style="left:806.00px;top:183.50px;font-size:8px;line-height:10px;color:#6a6a6a;font-weight:normal;font-family:'Liberation Sans',sans-serif;transform:scale(0.929,1.000);transform-origin:0 0;-webkit-text-stroke:0.12px #6a6a6a;">要素長</div>
<div class="a" style="left:691.5px;top:197px;width:188px;height:1px;background:#dcdcdc"></div>
<div class="a tx" style="left:694.20px;top:206.95px;font-size:8px;line-height:10px;color:#222;font-weight:normal;font-family:'Liberation Sans',sans-serif;transform:scale(0.796,1.000);transform-origin:0 0;-webkit-text-stroke:0.12px #222;">配置オフセット</div>
<div class="a tx" style="left:745.20px;top:206.40px;font-size:8px;line-height:10px;color:#333;font-weight:normal;font-family:'Liberation Sans',sans-serif;transform:scale(1.020,1.000);transform-origin:0 0;-webkit-text-stroke:0.12px #333;">X</div>
<div class="a" style="left:752.5px;top:203px;width:52px;height:14.5px;border:1px solid #b4b4b4;background:#fff"></div>
<div class="a tx" style="left:756.00px;top:206.00px;font-size:8px;line-height:10px;color:#333;font-weight:normal;font-family:'Liberation Sans',sans-serif;transform:scale(0.740,1.000);transform-origin:0 0;-webkit-text-stroke:0.12px #333;">0</div>
<div class="a tx" style="left:812.00px;top:206.40px;font-size:8px;line-height:10px;color:#333;font-weight:normal;font-family:'Liberation Sans',sans-serif;-webkit-text-stroke:0.12px #333;">Y</div>
<div class="a" style="left:819.3px;top:203.4px;width:52px;height:14.2px;border:1px solid #b4b4b4;background:#fff"></div>
<div class="a tx" style="left:823.00px;top:206.00px;font-size:8px;line-height:10px;color:#333;font-weight:normal;font-family:'Liberation Sans',sans-serif;transform:scale(0.740,1.000);transform-origin:0 0;-webkit-text-stroke:0.12px #333;">0</div>
<div class="a" style="left:692.3px;top:225.7px;width:53.7px;height:15px;border:1px solid #c8c8c8;background:#fff"></div>
<div class="a tx" style="left:697.25px;top:229.50px;font-size:8px;line-height:10px;color:#333;font-weight:normal;font-family:'Liberation Sans',sans-serif;transform:scale(1.184,1.000);transform-origin:0 0;-webkit-text-stroke:0.12px #333;">－ 絶対 －</div>
<div class="a tx" style="left:753.20px;top:228.90px;font-size:8px;line-height:10px;color:#333;font-weight:normal;font-family:'Liberation Sans',sans-serif;transform:scale(1.020,1.000);transform-origin:0 0;-webkit-text-stroke:0.12px #333;">X</div>
<div class="a" style="left:760.1px;top:226.2px;width:52.4px;height:14.4px;border:1px solid #b4b4b4;background:#fff"></div>
<div class="a tx" style="left:764.00px;top:229.00px;font-size:8px;line-height:10px;color:#333;font-weight:normal;font-family:'Liberation Sans',sans-serif;transform:scale(0.740,1.000);transform-origin:0 0;-webkit-text-stroke:0.12px #333;">0</div>
<div class="a tx" style="left:820.00px;top:228.90px;font-size:8px;line-height:10px;color:#333;font-weight:normal;font-family:'Liberation Sans',sans-serif;-webkit-text-stroke:0.12px #333;">Y</div>
<div class="a" style="left:827px;top:226.2px;width:52px;height:14.4px;border:1px solid #b4b4b4;background:#fff"></div>
<div class="a tx" style="left:831.00px;top:229.00px;font-size:8px;line-height:10px;color:#333;font-weight:normal;font-family:'Liberation Sans',sans-serif;transform:scale(0.740,1.000);transform-origin:0 0;-webkit-text-stroke:0.12px #333;">0</div>
<svg class="a" style="left:0;top:0" width="160" height="350"><path d="M21.90 96.5H30.30M33.88 96.5H42.28M45.86 96.5H54.26M57.84 96.5H66.24M69.82 96.5H78.22M81.80 96.5H90.20M93.78 96.5H102.18M105.76 96.5H114.16M117.74 96.5H126.14M129.72 96.5H138.12M145.7 104.40V112.90M145.7 116.43V124.93M145.7 128.46V136.96M145.7 140.49V148.99M145.7 152.52V161.02M145.7 164.55V173.05M145.7 176.58V185.08M145.7 188.61V197.11M145.7 200.64V209.14M145.7 212.67V221.17M145.7 224.70V233.20M145.7 236.73V245.23M145.7 248.76V257.26M145.7 260.79V269.29M145.7 272.82V281.32M145.7 284.85V293.35M145.7 296.88V305.38M145.7 308.91V317.41M145.7 320.94V329.44M24.80 340.2H33.00M36.84 340.2H45.04M48.88 340.2H57.08M60.92 340.2H69.12M72.96 340.2H81.16M85.00 340.2H93.20M97.04 340.2H105.24M109.08 340.2H117.28M121.12 340.2H129.32M13.5 102.60V111.40M13.5 114.65V123.45M13.5 126.70V135.50M13.5 138.75V147.55M13.5 150.80V159.60M13.5 162.85V171.65M13.5 174.90V183.70M13.5 186.95V195.75M13.5 199.00V207.80M13.5 211.05V219.85M13.5 223.10V231.90M13.5 235.15V243.95M13.5 247.20V256.00M13.5 259.25V268.05M13.5 271.30V280.10M13.5 283.35V292.15M13.5 295.40V304.20M13.5 307.45V316.25M13.5 319.50V328.30" stroke="#ff0000" stroke-width="3" fill="none"/><path d="M13.5 100.1V96.5H18M141.9 96.5H145.7V101M145.7 333V340.2H133.2M21 340.2H13.5V332" stroke="#ff0000" stroke-width="3" fill="none" stroke-linejoin="round"/></svg>
<div class="a" style="left:11.7px;top:17.5px;width:150.3px;height:62px;border:3.2px solid #000;border-radius:9px;background:#fff"></div>
<div class="a tx" style="left:24.27px;top:34.08px;font-size:30px;line-height:32px;color:#000;font-weight:normal;font-family:'Liberation Sans',sans-serif;transform:scale(1.031,0.920);transform-origin:0 0;-webkit-text-stroke:0.55px #000;">形鋼配置</div>
</body></html>
